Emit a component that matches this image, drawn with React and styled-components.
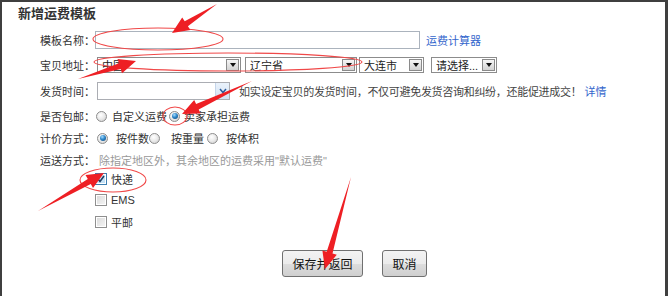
import React from "react";
import styled, { createGlobalStyle } from "styled-components";

const GlobalStyle = createGlobalStyle`
  html, body {
    margin: 0;
    padding: 0;
    background: #fff;
  }
  body {
    font-family: "Liberation Sans", "Noto Sans CJK SC", sans-serif;
    font-size: 11px;
    color: #333;
  }
`;

const Frame = styled.div`
  position: relative;
  box-sizing: border-box;
  width: 668px;
  height: 296px;
  border-top: 2px solid #3f3f3f;
  border-left: 2px solid #3f3f3f;
  border-right: 3px solid #3f3f3f;
  background: #fff;
  overflow: hidden;
`;

const Title = styled.h2`
  margin: 0;
  height: 24px;
  padding-left: 16px;
  font-size: 13px;
  font-weight: bold;
  line-height: 24px;
  color: #333;
`;

const Row = styled.div`
  display: flex;
  align-items: center;
  height: ${(p) => p.$h}px;
  padding-left: ${(p) => (p.$indent != null ? p.$indent : 38)}px;
  white-space: nowrap;
`;

const Label = styled.span`
  flex: 0 0 53px;
  color: #333;
`;

const TextInput = styled.div`
  box-sizing: border-box;
  width: 325px;
  height: 18px;
  border: 1px solid #abb3bd;
  background: #fff;
  margin-right: 6px;
`;

const Link = styled.a`
  color: #3366cc;
  text-decoration: none;
  margin-left: ${(p) => p.$ml || 0}px;
`;

const Combo = styled.div`
  box-sizing: border-box;
  display: flex;
  align-items: center;
  justify-content: space-between;
  width: ${(p) => p.$w}px;
  height: 16px;
  margin-left: ${(p) => p.$ml || 0}px;
  padding: 0 1px 0 4px;
  border: 1px solid #8c8c8c;
  background: #fff;
  color: #222;
  font-size: 11px;
`;

const ComboArrow = styled.span`
  box-sizing: border-box;
  display: flex;
  align-items: center;
  justify-content: center;
  width: 13px;
  height: 12px;
  border: 1px solid #8a8a8a;
  background: linear-gradient(#f6f6f6, #d2d2d2);

  &::after {
    content: "";
    border-left: 3px solid transparent;
    border-right: 3px solid transparent;
    border-top: 4px solid #111;
  }
`;

const DateSelect = styled.div`
  box-sizing: border-box;
  display: flex;
  justify-content: flex-end;
  width: 133px;
  height: 18px;
  margin-left: 2px;
  border: 1px solid #abadb3;
  background: #fff;
`;

const DateButton = styled.span`
  display: flex;
  align-items: center;
  justify-content: center;
  width: 13px;
  background: linear-gradient(#eaf2fb, #d3e2f3);
  border-left: 1px solid #c5d5ea;
`;

const Hint = styled.span`
  margin-left: ${(p) => p.$ml || 0}px;
  letter-spacing: ${(p) => p.$tight ? "-0.3px" : "0"};
  color: ${(p) => (p.$muted ? "#999" : "#444")};
`;

const Option = styled.label`
  display: inline-flex;
  align-items: center;
  gap: ${(p) => p.$gap}px;
  margin-left: ${(p) => p.$ml || 0}px;
  color: #333;
`;

const Radio = styled.span`
  box-sizing: border-box;
  display: inline-flex;
  align-items: center;
  justify-content: center;
  width: 11px;
  height: 11px;
  border-radius: 50%;
  border: 1px solid #8d8d8d;
  background: radial-gradient(circle at 40% 35%, #ffffff 0%, #ececec 45%, #c9c9c9 100%);

  &::after {
    content: "";
    display: ${(p) => (p.$checked ? "block" : "none")};
    width: 6px;
    height: 6px;
    border-radius: 50%;
    background: radial-gradient(circle at 38% 32%, #a6dcff 0%, #2c86c9 45%, #0d3f6e 100%);
  }
`;

const Checkbox = styled.span`
  box-sizing: border-box;
  display: inline-flex;
  align-items: center;
  justify-content: center;
  width: 12px;
  height: 12px;
  border: 1px solid ${(p) => (p.$checked ? "#3c7fb1" : "#8f8f8f")};
  background: ${(p) =>
    p.$checked
      ? "linear-gradient(135deg, #dff0fb, #b9dcf4)"
      : "linear-gradient(135deg, #d8d8d8, #f6f6f6)"};
  box-shadow: inset 0 0 0 1px #fff;
`;

const Actions = styled.div`
  display: flex;
  gap: 19px;
  margin-top: 19px;
  padding-left: 280px;
`;

const Button = styled.button`
  box-sizing: border-box;
  width: ${(p) => p.$w}px;
  height: 27px;
  padding: 0;
  border: 1px solid #707070;
  border-radius: 3px;
  background: linear-gradient(#f3f3f3 0%, #ebebeb 50%, #dddddd 51%, #cfcfcf 100%);
  font-family: "Noto Sans CJK SC", sans-serif;
  font-size: 12px;
  color: #111;
`;

const Overlay = styled.svg`
  position: absolute;
  top: -2px;
  left: -2px;
  pointer-events: none;
`;

function arrowPoints(tx, ty, px, py, shaft = 3, head = 7.5, headLen = 17) {
  const dx = px - tx;
  const dy = py - ty;
  const len = Math.hypot(dx, dy);
  const ux = dx / len;
  const uy = dy / len;
  const nx = -uy;
  const ny = ux;
  const bx = px - ux * headLen;
  const by = py - uy * headLen;
  const pts = [
    [tx, ty],
    [bx + nx * shaft, by + ny * shaft],
    [bx + nx * head, by + ny * head],
    [px, py],
    [bx - nx * head, by - ny * head],
    [bx - nx * shaft, by - ny * shaft],
  ];
  return pts.map((p) => p.map((v) => v.toFixed(1)).join(",")).join(" ");
}

const arrows = [
  [217, 4, 172, 33],
  [78, 79, 136, 61],
  [252, 81, 182, 114],
  [38, 211, 104, 173],
  [351, 177, 325, 269],
];

const rings = [
  [158, 39, 65, 11],
  [228, 62, 134, 9],
  [175, 116, 12, 9],
  [113, 180, 33, 12],
];

const Annotations = () => (
  <Overlay width="668" height="296" viewBox="0 0 668 296">
    {rings.map(([cx, cy, rx, ry], i) => (
      <ellipse key={i} cx={cx} cy={cy} rx={rx} ry={ry} fill="none" stroke="#f04848" strokeWidth="1.1" />
    ))}
    {arrows.map(([a, b, c, d], i) => (
      <polygon key={i} points={arrowPoints(a, b, c, d)} fill="#ee1f24" />
    ))}
  </Overlay>
);

const Check = () => (
  <svg width="8" height="8" viewBox="0 0 8 8">
    <path d="M1 4 L3 6.5 L7 1" fill="none" stroke="#1d3f63" strokeWidth="1.6" />
  </svg>
);

const Chevron = () => (
  <svg width="8" height="6" viewBox="0 0 8 6">
    <path d="M1 1 L4 4.5 L7 1" fill="none" stroke="#2a5a9a" strokeWidth="1.5" />
  </svg>
);

export default function App() {
  return (
    <>
      <GlobalStyle />
      <Frame>
        <Title>新增运费模板</Title>

        <Row $h={27}>
          <Label>模板名称：</Label>
          <TextInput />
          <Link href="#">运费计算器</Link>
        </Row>

        <Row $h={23}>
          <Label>宝贝地址：</Label>
          <Combo $w={144} $ml={2}>
            中国
            <ComboArrow />
          </Combo>
          <Combo $w={112} $ml={4}>
            辽宁省
            <ComboArrow />
          </Combo>
          <Combo $w={65} $ml={2}>
            大连市
            <ComboArrow />
          </Combo>
          <Combo $w={66} $ml={7}>
            请选择...
            <ComboArrow />
          </Combo>
        </Row>

        <Row $h={29}>
          <Label>发货时间：</Label>
          <DateSelect>
            <DateButton>
              <Chevron />
            </DateButton>
          </DateSelect>
          <Hint $ml={9} $tight>如实设定宝贝的发货时间，不仅可避免发货咨询和纠纷，还能促进成交！</Hint>
          <Link href="#" $ml={3}>详情</Link>
        </Row>

        <Row $h={22}>
          <Label>是否包邮：</Label>
          <Option $gap={5} $ml={1}>
            <Radio />
            自定义运费
          </Option>
          <Option $gap={4} $ml={2}>
            <Radio $checked />
            卖家承担运费
          </Option>
        </Row>

        <Row $h={22}>
          <Label>计价方式：</Label>
          <Option $gap={8} $ml={2}>
            <Radio $checked />
            按件数
          </Option>
          <Option $gap={11} $ml={0}>
            <Radio />
            按重量
          </Option>
          <Option $gap={8} $ml={3}>
            <Radio />
            按体积
          </Option>
        </Row>

        <Row $h={21}>
          <Label>运送方式：</Label>
          <Hint $muted $ml={4}>除指定地区外，其余地区的运费采用"默认运费"</Hint>
        </Row>

        <Row $h={17} $indent={93}>
          <Option $gap={4}>
            <Checkbox $checked>
              <Check />
            </Checkbox>
            快递
          </Option>
        </Row>
        <Row $h={26} $indent={93}>
          <Option $gap={4}>
            <Checkbox />
            EMS
          </Option>
        </Row>
        <Row $h={18} $indent={93}>
          <Option $gap={4}>
            <Checkbox />
            平邮
          </Option>
        </Row>

        <Actions>
          <Button $w={81}>保存并返回</Button>
          <Button $w={45}>取消</Button>
        </Actions>

        <Annotations />
      </Frame>
    </>
  );
}
